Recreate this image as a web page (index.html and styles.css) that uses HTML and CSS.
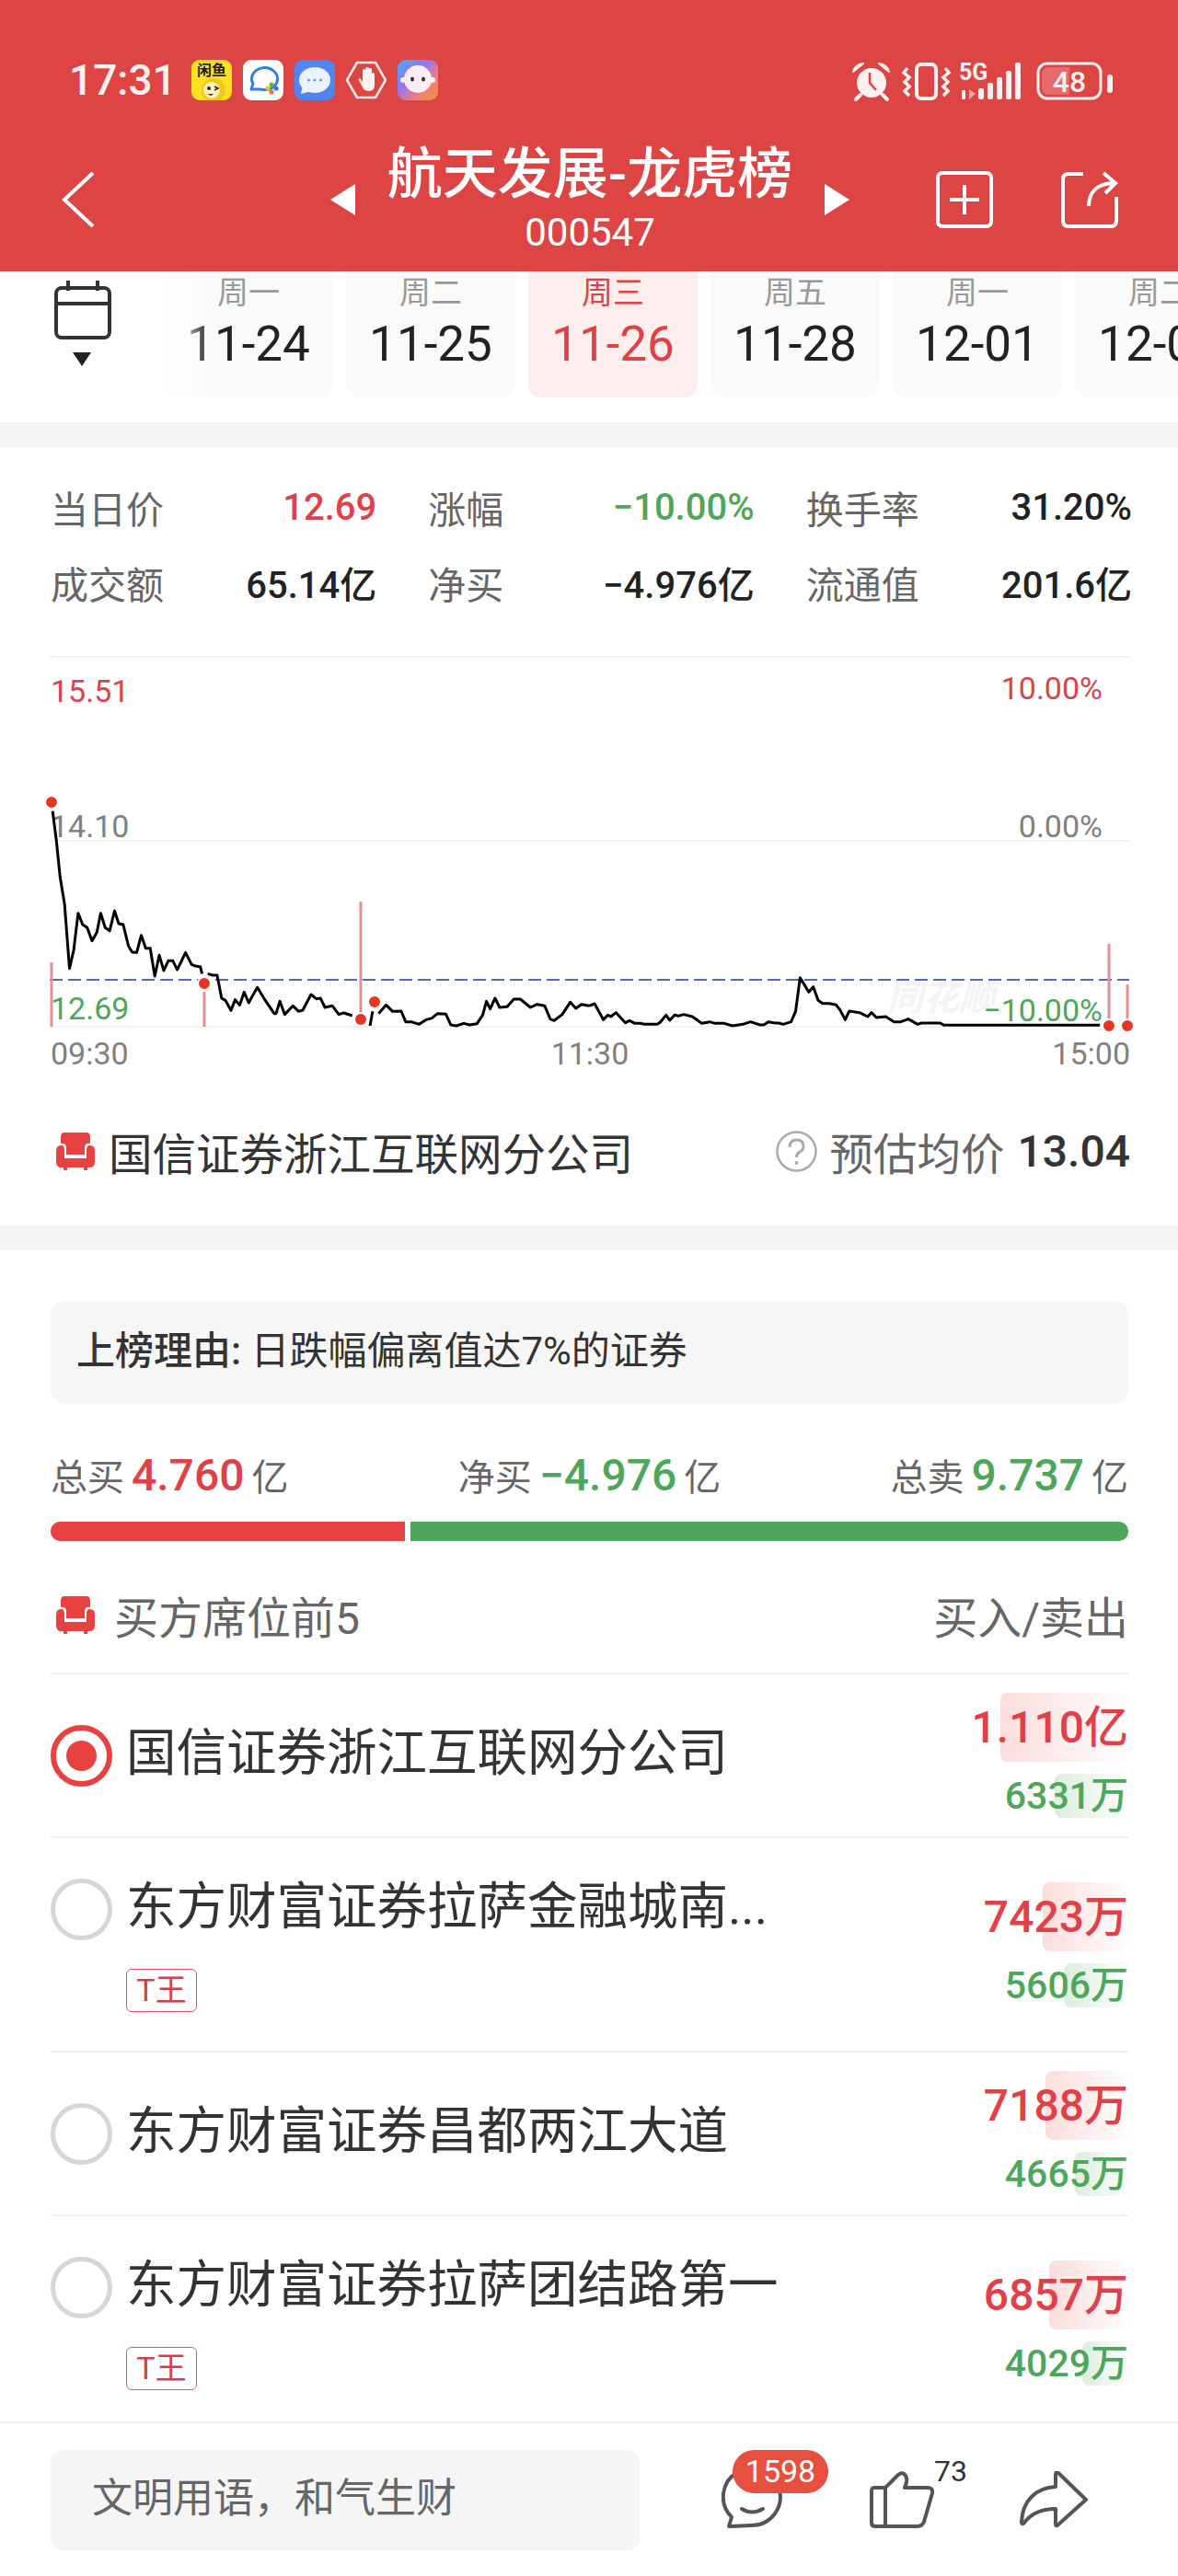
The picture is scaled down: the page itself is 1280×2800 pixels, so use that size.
FILE: index.html
```html
<!DOCTYPE html>
<html lang="zh-CN">
  <head>
    <meta charset="UTF-8" />
    <meta name="viewport" content="width=device-width, initial-scale=1.0" />
    <title>航天发展-龙虎榜</title>

    <link rel="stylesheet" href="styles.css">
  </head>
  <body>
    <main class="page">
      <!-- Header -->
      <header class="top">
        <div class="status">
          <div class="status-left">
            <span class="clock">17:31</span>
            <svg class="app" viewBox="0 0 44 44">
              <rect width="44" height="44" rx="9" fill="#fbe122" />
              <text class="app-text" x="22" y="17" text-anchor="middle">闲鱼</text>
              <circle cx="24" cy="33" r="13" fill="#f6c51c" />
              <circle cx="22" cy="33" r="9" fill="#fff4b8" />
              <circle cx="19" cy="31" r="2" fill="#222" />
              <path d="M25 29 l4 2 l-4 2" fill="none" stroke="#222" stroke-width="1.5" />
              <path d="M18 37 q3 4 6 0 z" fill="#7a2a12" />
            </svg>
            <svg class="app" viewBox="0 0 44 44">
              <rect width="44" height="44" rx="9" fill="#fff" />
              <path d="M9 32 L11 26 A14 12 0 1 1 19 32 Z" fill="none" stroke="#2f7fd6" stroke-width="3" stroke-linejoin="round" />
              <circle cx="31" cy="27" r="2.6" fill="#6fb536" />
              <circle cx="36" cy="31" r="2.6" fill="#2f7fd6" />
              <circle cx="31" cy="35" r="2.6" fill="#e3782f" />
              <circle cx="27" cy="31" r="2.6" fill="#f3c21c" />
            </svg>
            <svg class="app" viewBox="0 0 44 44">
              <rect width="44" height="44" rx="9" fill="#4f84f1" />
              <ellipse cx="22" cy="22" rx="17" ry="14" fill="#eaf2fe" />
              <path d="M9 27 L7 37 L18 34 Z" fill="#eaf2fe" />
              <circle cx="15.500" cy="22" r="1.600" fill="#6c98ef" />
              <circle cx="22" cy="22" r="1.600" fill="#6c98ef" />
              <circle cx="28.500" cy="22" r="1.600" fill="#6c98ef" />
            </svg>
            <svg class="app" viewBox="0 0 44 44">
              <path d="M12 3 H32 L43 22 L32 41 H12 L1 22 Z" fill="none" stroke="#fdeaea" stroke-width="2.500" stroke-linejoin="round" />
              <path d="M14 22 L18 30 Q20 34 25 34 Q31 34 31 27 V15 Q29 13 28 15 V10 Q26 8 25 10 V9 Q23 7 21 9 V11 Q19 9 18 11 V24 L15 20 Q13 20 14 22 Z" fill="#fdf2f2" />
            </svg>
            <svg class="app" viewBox="0 0 44 44">
              <defs>
                <linearGradient id="blob-bg" x1="0" y1="0" x2="1" y2="1">
                  <stop offset="0" stop-color="#4aa8f5" />
                  <stop offset="0.400" stop-color="#9a74f0" />
                  <stop offset="0.700" stop-color="#ef7f7a" />
                  <stop offset="1" stop-color="#f0932f" />
                </linearGradient>
              </defs>
              <rect width="44" height="44" rx="9" fill="url(#blob-bg)" />
              <ellipse cx="22" cy="21" rx="15" ry="15" fill="#fbeef2" />
              <circle cx="6" cy="22" r="3" fill="#fbeef2" />
              <circle cx="38" cy="22" r="3" fill="#fbeef2" />
              <ellipse cx="16" cy="21" rx="2" ry="2.500" fill="#3a2a4a" />
              <ellipse cx="28" cy="21" rx="2" ry="2.500" fill="#3a2a4a" />
            </svg>
          </div>
          <svg class="status-right" viewBox="920 60 295 50">
            <!-- alarm -->
            <circle cx="947" cy="88" r="16" fill="#fdf0f0" />
            <path d="M927 76 Q929 68 938 67 Z M966 76 Q964 68 955 67 Z" fill="#fdf0f0" stroke="#fdf0f0" stroke-width="2" stroke-linejoin="round" />
            <path d="M935 101 L930 106 M959 101 L964 106" stroke="#fdf0f0" stroke-width="4" stroke-linecap="round" />
            <path d="M945 77 V88 L952 96" fill="none" stroke="#dc4543" stroke-width="2.500" />
            <!-- vibrate -->
            <rect x="996" y="68" width="21" height="37" rx="5" fill="none" stroke="#fdf0f0" stroke-width="4" />
            <path d="M986 72 L982 77 L988 82 L983 87 L988 92 L983 97 L988 102 M1027 72 L1031 77 L1025 82 L1030 87 L1025 92 L1030 97 L1025 102" fill="none" stroke="#fdf0f0" stroke-width="3.500" />
            <!-- network -->
            <text class="net-text" x="1042" y="85">5G</text>
            <rect x="1045" y="96" width="4" height="10" rx="1" fill="#fdf0f0" />
            <path d="M1053 95 V106 L1060 100 Z" fill="#f3a5a5" />
            <rect x="1063" y="94" width="6" height="12" rx="2" fill="#fdf0f0" />
            <rect x="1073" y="88" width="6" height="18" rx="2" fill="#fdf0f0" />
            <rect x="1083" y="82" width="6" height="24" rx="2" fill="#fdf0f0" />
            <rect x="1093" y="75" width="6" height="31" rx="2" fill="#fdf0f0" />
            <rect x="1103" y="66" width="6" height="40" rx="2" fill="#fdf0f0" />
            <!-- battery -->
            <rect x="1128" y="67" width="68" height="38" rx="10" fill="none" stroke="#fdf0f0" stroke-width="3" />
            <path d="M1140 71 H1162 V101 H1140 Q1132 101 1132 93 V79 Q1132 71 1140 71 Z" fill="#e76a6a" />
            <text class="battery-text" x="1162" y="98" text-anchor="middle">48</text>
            <rect x="1203" y="79" width="6" height="20" rx="3" fill="#fdf0f0" />
          </svg>
        </div>

        <nav class="nav">
          <svg class="nav-back" viewBox="0 0 36 62">
            <polyline points="34,2 3,31 34,60" fill="none" stroke="#fff" stroke-width="4" />
          </svg>
          <div class="nav-title">
            <span class="arrow arrow-left"></span>
            <div class="nav-text">
              <h1>航天发展-龙虎榜</h1>
              <p>000547</p>
            </div>
            <span class="arrow arrow-right"></span>
          </div>
          <div class="nav-actions">
            <svg class="nav-icon" viewBox="0 0 62 62">
              <rect x="2" y="2" width="58" height="58" rx="5" fill="none" stroke="#fff" stroke-width="4" />
              <path d="M15 31 H47 M31 15 V47" stroke="#fff" stroke-width="4" />
            </svg>
            <svg class="nav-icon" viewBox="0 0 62 62">
              <path d="M24 3 H8 Q2 3 2 9 V54 Q2 60 8 60 H54 Q60 60 60 54 V28" fill="none" stroke="#fff" stroke-width="4" />
              <path d="M30 38 C30 24 38 14 56 13 M46 2 L59 13 L48 24" fill="none" stroke="#fff" stroke-width="4" />
            </svg>
          </div>
        </nav>
      </header>

      <!-- Date picker -->
      <section class="dates">
        <div class="cal">
          <svg class="cal-icon" viewBox="0 0 62 64">
            <rect x="2" y="8" width="58" height="54" rx="6" fill="none" stroke="#333" stroke-width="4" />
            <path d="M2 25 H60" stroke="#333" stroke-width="4" />
            <path d="M15 0 V11 M47 0 V11" stroke="#333" stroke-width="4" />
          </svg>
          <span class="cal-caret"></span>
        </div>
        <div class="tabs">
          <div class="tab"><span>周一</span><b>11-24</b></div>
          <div class="tab"><span>周二</span><b>11-25</b></div>
          <div class="tab tab-active"><span>周三</span><b>11-26</b></div>
          <div class="tab"><span>周五</span><b>11-28</b></div>
          <div class="tab"><span>周一</span><b>12-01</b></div>
          <div class="tab"><span>周二</span><b>12-02</b></div>
        </div>
      </section>

      <div class="band"></div>

      <!-- Quote -->
      <section class="stats">
        <div class="stat"><span>当日价</span><b class="up">12.69</b></div>
        <div class="stat"><span>涨幅</span><b class="down">−10.00%</b></div>
        <div class="stat"><span>换手率</span><b>31.20%</b></div>
        <div class="stat"><span>成交额</span><b>65.14亿</b></div>
        <div class="stat"><span>净买</span><b>−4.976亿</b></div>
        <div class="stat"><span>流通值</span><b>201.6亿</b></div>
      </section>

      <svg class="chart" viewBox="0 680 1280 490">
        <text class="chart-mark" x="964" y="1098">同花顺</text>

        <path d="M54 714 H1227 M54 914 H1227 M54 1116 H1227" stroke="#f1f1f1" stroke-width="2" />
        <path d="M54 1065 H1227" stroke="#5069c9" stroke-width="2" stroke-dasharray="14 6" />

        <path d="M56 1046 V1116 M222 1078 V1116 M392 980 V1116 M1205 1026 V1116 M1225 1070 V1116" stroke="#e58d96" stroke-width="3" />

        <text class="chart-text up-fill" x="55" y="763">15.51</text>
        <text class="chart-text up-fill" x="1198" y="760" text-anchor="end">10.00%</text>
        <text class="chart-text grey-fill" x="55" y="910">14.10</text>
        <text class="chart-text grey-fill" x="1198" y="910" text-anchor="end">0.00%</text>
        <text class="chart-text down-fill" x="55" y="1108">12.69</text>
        <text class="chart-text down-fill" x="1198" y="1110" text-anchor="end">−10.00%</text>
        <text class="chart-text grey-fill" x="55" y="1157">09:30</text>
        <text class="chart-text grey-fill" x="641" y="1157" text-anchor="middle">11:30</text>
        <text class="chart-text grey-fill" x="1228" y="1157" text-anchor="end">15:00</text>

        <!-- curve points are in a 2.45x / 3x grid -->
        <g transform="translate(0,680) scale(0.40816,0.33333)" class="curve">
          <polyline points="140,605 150,700 160,820 172,910 185,1118 196,1060 208,938 220,975 232,985 245,1028 258,1000 268,938 280,985 292,995 305,930 316,972 328,975 342,1045 352,1065 364,1066 376,1010 388,1052 400,1052 412,1143 424,1075 436,1125 448,1093 460,1093 472,1122 494,1066 510,1105 520,1110 533,1112 538,1135" />
          <polyline points="553,1135 565,1140 578,1140 590,1215 600,1222 615,1255 626,1220 638,1238 650,1195 662,1230 685,1180 705,1220 730,1265 735,1265 745,1225 758,1268 780,1240 795,1258 806,1254 828,1203 842,1217 853,1215 865,1245 885,1240 902,1268 915,1263 938,1272" />
          <polyline points="985,1305 992,1258" />
          <polyline points="1008,1265 1028,1237 1045,1258 1068,1257 1080,1292 1095,1292 1116,1300 1135,1285 1150,1280 1165,1265 1187,1267 1200,1302 1215,1305 1235,1297 1250,1302 1270,1298 1285,1270 1295,1225 1305,1250 1318,1215 1330,1245 1350,1243 1368,1218 1385,1218 1412,1245 1430,1235 1450,1240 1465,1283 1475,1288 1497,1268 1518,1228 1533,1248 1548,1235 1568,1240" />
        </g>
        <g transform="translate(640,680) scale(0.40816,0.33333)" class="curve">
          <polyline points="0,1240 15,1233 38,1285 50,1270 58,1275 72,1262 97,1295 108,1288 122,1297 135,1297 148,1300 182,1300 190,1293 205,1270 215,1287 228,1270 238,1273 252,1268 275,1275 300,1297 322,1292 335,1297 360,1297 382,1305 410,1300 430,1292 455,1302 465,1302 478,1292 495,1296 505,1296 517,1300 538,1292 550,1258 562,1148 585,1195 597,1178 610,1222 622,1232 640,1232 658,1237 668,1253 682,1285 693,1257 720,1262 742,1275 752,1262 765,1278 790,1275 812,1292 830,1292 850,1283 875,1300 885,1296 935,1296 945,1303 1360,1303" />
        </g>

        <circle class="chart-dot" cx="56" cy="872" r="7" />
        <circle class="chart-dot" cx="222" cy="1069" r="7" />
        <circle class="chart-dot" cx="392" cy="1108" r="7" />
        <circle class="chart-dot" cx="407" cy="1089" r="7" />
        <circle class="chart-dot" cx="1205" cy="1115" r="7" />
        <circle class="chart-dot" cx="1225" cy="1115" r="7" />
      </svg>

      <div class="seat-head">
        <div class="seat-head-name">
          <svg class="sofa" viewBox="0 0 44 44">
            <path d="M10 2 H34 Q38 2 38 7 V14 Q32 13 32 19 V26 H12 V19 Q12 13 6 14 V7 Q6 2 10 2 Z" fill="#e84142" />
            <path d="M6 16 Q1 16 1 22 V34 Q1 40 7 40 H9 V43 H13 V40 H31 V43 H35 V40 H37 Q43 40 43 34 V22 Q43 16 38 16 Q34 16 34 21 V30 H10 V21 Q10 16 6 16 Z" fill="#e84142" />
          </svg>
          国信证券浙江互联网分公司
        </div>
        <div class="seat-head-avg">
          <svg class="help" viewBox="0 0 45 45">
            <circle cx="22.500" cy="22.500" r="21" fill="none" stroke="#aaa" stroke-width="2.500" />
            <path d="M15 18 Q15 10 22.500 10 Q30 10 30 17 Q30 21 26 23 Q22.500 25 22.500 29" fill="none" stroke="#aaa" stroke-width="3" />
            <circle cx="22.500" cy="35" r="2" fill="#aaa" />
          </svg>
          <span>预估均价</span>
          <b>13.04</b>
        </div>
      </div>

      <div class="band"></div>

      <!-- Dragon tiger list -->
      <section class="board">
        <div class="reason"><b>上榜理由:</b> 日跌幅偏离值达7%的证券</div>

        <div class="totals">
          <div class="total">总买<b class="up">4.760</b>亿</div>
          <div class="total">净买<b class="down">−4.976</b>亿</div>
          <div class="total">总卖<b class="down">9.737</b>亿</div>
        </div>

        <div class="ratio">
          <div class="ratio-buy"></div>
          <div class="ratio-sell"></div>
        </div>

        <div class="list-head">
          <div class="list-title">
            <svg class="sofa" viewBox="0 0 44 44">
              <path d="M10 2 H34 Q38 2 38 7 V14 Q32 13 32 19 V26 H12 V19 Q12 13 6 14 V7 Q6 2 10 2 Z" fill="#e84142" />
              <path d="M6 16 Q1 16 1 22 V34 Q1 40 7 40 H9 V43 H13 V40 H31 V43 H35 V40 H37 Q43 40 43 34 V22 Q43 16 38 16 Q34 16 34 21 V30 H10 V21 Q10 16 6 16 Z" fill="#e84142" />
            </svg>
            买方席位前5
          </div>
          <div>买入/卖出</div>
        </div>

        <div class="row">
          <div class="row-main">
            <span class="radio radio-on"></span>
            <div class="row-name">国信证券浙江互联网分公司</div>
          </div>
          <div class="amounts">
            <div class="amount amount-buy"><i style="width: 139px"></i><b>1.110亿</b></div>
            <div class="amount amount-sell"><i style="width: 80px"></i><b>6331万</b></div>
          </div>
        </div>

        <div class="row row-tall">
          <div class="row-main">
            <span class="radio"></span>
            <div class="row-name">东方财富证券拉萨金融城南...</div>
            <span class="tag">T王</span>
          </div>
          <div class="amounts">
            <div class="amount amount-buy"><i style="width: 93px"></i><b>7423万</b></div>
            <div class="amount amount-sell"><i style="width: 70px"></i><b>5606万</b></div>
          </div>
        </div>

        <div class="row">
          <div class="row-main">
            <span class="radio"></span>
            <div class="row-name">东方财富证券昌都两江大道</div>
          </div>
          <div class="amounts">
            <div class="amount amount-buy"><i style="width: 90px"></i><b>7188万</b></div>
            <div class="amount amount-sell"><i style="width: 58px"></i><b>4665万</b></div>
          </div>
        </div>

        <div class="row row-tall">
          <div class="row-main">
            <span class="radio"></span>
            <div class="row-name">东方财富证券拉萨团结路第一</div>
            <span class="tag">T王</span>
          </div>
          <div class="amounts">
            <div class="amount amount-buy"><i style="width: 86px"></i><b>6857万</b></div>
            <div class="amount amount-sell"><i style="width: 50px"></i><b>4029万</b></div>
          </div>
        </div>
      </section>

      <!-- Comment bar, stays over the list -->
      <footer class="bar">
        <div class="bar-input">文明用语，和气生财</div>
        <div class="bar-item bar-comment">
          <svg class="bar-icon" viewBox="0 0 66 62">
            <path d="M8 60 L11 50 A31 31 0 1 1 33 59 L11 60 Z" fill="none" stroke="#555" stroke-width="4" stroke-linejoin="round" />
            <path d="M22 41 Q33 48 45 41" fill="none" stroke="#555" stroke-width="4" stroke-linecap="round" />
          </svg>
          <span class="badge">1598</span>
        </div>
        <div class="bar-item bar-like">
          <svg class="bar-icon" viewBox="0 0 70 62">
            <path d="M5 18 H17 L31 4 Q36 0 39 5 Q42 10 38 18 H63 Q69 18 68 24 L59 55 Q57 60 52 60 H6 Q2 60 2 56 V22 Q2 18 5 18 Z M17 18 V60" fill="none" stroke="#555" stroke-width="4" stroke-linejoin="round" />
          </svg>
          <span class="like-count">73</span>
        </div>
        <div class="bar-item bar-share">
          <svg class="bar-icon" viewBox="0 0 74 62">
            <path d="M72 31 L42 2 Q39 0 39 4 V17 C18 18 3 32 2 55 Q2 59 5 56 C14 44 26 41 39 41 V57 Q39 61 42 58 Z" fill="none" stroke="#555" stroke-width="4" stroke-linejoin="round" />
          </svg>
        </div>
      </footer>
    </main>
  </body>
</html>
```

FILE: styles.css
```css
* {
  box-sizing: border-box;
}

body {
  margin: 0;
  background: #fff;
  font-family: Roboto, "Noto Sans CJK SC", sans-serif;
  color: #222;
}

h1,
p {
  margin: 0;
}

.page {
  position: relative;
  width: 1280px;
  height: 2800px;
  overflow: hidden;
}

.up {
  color: #e04047;
}

.down {
  color: #4ea65a;
}

.band {
  height: 27px;
  background: #f5f5f5;
}

/* Header */
.top {
  height: 295px;
  padding-top: 64px;
  background: #dc4543;
  color: #fff;
}

.status {
  display: flex;
  justify-content: space-between;
  align-items: center;
  height: 45px;
  padding: 0 65px 0 75px;
}

.status-left {
  display: flex;
  align-items: center;
  gap: 12px;
}

.clock {
  width: 121px;
  font-size: 46px;
  font-weight: 500;
  color: #fdf0f0;
}

.app {
  display: block;
  width: 44px;
  height: 44px;
}

.app-text {
  font-size: 16px;
  font-weight: 700;
  fill: #222;
}

.status-right {
  display: block;
  width: 295px;
  height: 50px;
}

.net-text {
  font-size: 25px;
  font-weight: 700;
  fill: #fdf0f0;
}

.battery-text {
  font-size: 32px;
  font-weight: 500;
  fill: #fdf0f0;
}

.nav {
  display: grid;
  grid-template-columns: 1fr auto 1fr;
  align-items: center;
  margin-top: 46px;
  padding: 0 65px 0 67px;
}

.nav-back {
  display: block;
  width: 36px;
  height: 62px;
  margin-top: 4px;
}

.nav-title {
  display: flex;
  align-items: center;
  gap: 35px;
}

.nav-text {
  text-align: center;
}

.nav-text h1 {
  font-size: 60px;
  font-weight: 500;
  line-height: 70px;
}

.nav-text p {
  margin-top: 6px;
  font-size: 42px;
  line-height: 44px;
}

.arrow {
  width: 0;
  height: 0;
  margin-top: 4px;
  border-top: 17px solid transparent;
  border-bottom: 17px solid transparent;
}

.arrow-left {
  border-right: 27px solid #fff;
}

.arrow-right {
  border-left: 27px solid #fff;
}

.nav-actions {
  display: flex;
  justify-content: flex-end;
  gap: 74px;
  margin-top: 4px;
}

.nav-icon {
  display: block;
  width: 62px;
  height: 62px;
}

/* Date picker */
.dates {
  display: flex;
  height: 164px;
  overflow: hidden;
}

.cal {
  position: relative;
  z-index: 1;
  flex: none;
  width: 178px;
  padding: 10px 0 0 59px;
  background: #fff;
}

.cal::after {
  content: "";
  position: absolute;
  top: 0;
  left: 100%;
  width: 50px;
  height: 137px;
  background: linear-gradient(to right, rgba(255, 255, 255, 0.9), rgba(255, 255, 255, 0.5) 60%, rgba(255, 255, 255, 0));
}

.cal-icon {
  display: block;
  width: 62px;
  height: 64px;
}

.cal-caret {
  display: block;
  width: 0;
  height: 0;
  margin: 14px 0 0 20px;
  border-top: 15px solid #222;
  border-left: 10px solid transparent;
  border-right: 10px solid transparent;
}

.tabs {
  display: flex;
  gap: 14px;
}

.tab {
  display: flex;
  flex: none;
  flex-direction: column;
  align-items: center;
  width: 184px;
  height: 137px;
  border-radius: 0 0 14px 14px;
  background: #fafafa;
}

.tab span {
  margin-top: 5px;
  font-size: 34px;
  line-height: 36px;
  color: #999;
}

.tab b {
  margin-top: 8px;
  font-size: 53px;
  font-weight: 400;
  line-height: 60px;
  color: #222;
}

.tab-active {
  background: #fdeeee;
}

.tab-active span,
.tab-active b {
  color: #e04047;
}

/* Quote */
.stats {
  display: grid;
  grid-template-columns: repeat(3, 1fr);
  gap: 22px 56px;
  height: 194px;
  padding: 35px 50px 0 55px;
  align-content: start;
}

.stat {
  display: flex;
  justify-content: space-between;
  align-items: center;
  height: 60px;
  font-size: 41px;
}

.stat span {
  color: #666;
}

.stat b {
  font-size: 40px;
  font-weight: 500;
}

.chart {
  display: block;
  width: 1280px;
  height: 490px;
}

.chart-text {
  font-size: 34px;
}

.up-fill {
  fill: #d8444c;
}

.down-fill {
  fill: #4ea65a;
}

.grey-fill {
  fill: #808080;
}

.chart-mark {
  font-size: 39px;
  font-style: italic;
  font-weight: 700;
  fill: #f4f4f4;
}

.curve polyline {
  fill: none;
  stroke: #000;
  stroke-width: 3;
  stroke-linejoin: round;
  vector-effect: non-scaling-stroke;
}

.chart-dot {
  fill: #e53525;
  stroke: #fff;
  stroke-width: 2;
}

.seat-head {
  display: flex;
  justify-content: space-between;
  align-items: center;
  height: 162px;
  padding: 0 52px 0 60px;
  font-size: 47.500px;
}

.seat-head-name {
  display: flex;
  align-items: center;
  gap: 14px;
  color: #333;
}

.sofa {
  display: block;
  flex: none;
  width: 44px;
  height: 44px;
}

.seat-head-avg {
  display: flex;
  align-items: center;
}

.help {
  display: block;
  width: 45px;
  height: 45px;
  margin-right: 14px;
}

.seat-head-avg span {
  color: #666;
}

.seat-head-avg b {
  margin-left: 14px;
  font-size: 48px;
  font-weight: 500;
  color: #333;
}

/* Dragon tiger list */
.board {
  padding: 56px 54px 0 55px;
}

.reason {
  height: 110px;
  padding: 0 28px;
  border-radius: 14px;
  background: #f6f6f6;
  font-size: 42px;
  line-height: 108px;
  color: #333;
}

.reason b {
  font-weight: 500;
}

.totals {
  display: flex;
  justify-content: space-between;
  margin-top: 48px;
}

.total {
  display: flex;
  align-items: center;
  height: 60px;
  font-size: 40px;
  color: #666;
}

.total b {
  margin: 0 8px;
  font-size: 48px;
  font-weight: 500;
}

.ratio {
  display: flex;
  gap: 6px;
  height: 21px;
  margin-top: 21px;
}

.ratio-buy {
  flex: none;
  width: 385px;
  border-radius: 10px 0 0 10px;
  background: #e84142;
}

.ratio-sell {
  flex: 1;
  border-radius: 0 10px 10px 0;
  background: #4ea65a;
}

.list-head {
  display: flex;
  justify-content: space-between;
  align-items: center;
  height: 145px;
  padding: 17px 0 0 5px;
  border-bottom: 2px solid #eee;
  font-size: 48px;
  color: #666;
}

.list-title {
  display: flex;
  align-items: center;
  gap: 20px;
}

.row {
  display: flex;
  justify-content: space-between;
  align-items: center;
  height: 178px;
  border-bottom: 2px solid #eee;
}

.row-tall {
  height: 233px;
}

.row-main {
  display: grid;
  grid-template-columns: 67px auto;
  column-gap: 15px;
  padding-bottom: 6px;
}

.row-name {
  font-size: 54.500px;
  line-height: 76px;
  color: #333;
}

.radio {
  position: relative;
  width: 67px;
  height: 67px;
  margin-top: 8px;
  border: 5px solid #d6d6d6;
  border-radius: 50%;
}

.radio-on {
  border: 6px solid #e84142;
}

.radio-on::after {
  content: "";
  position: absolute;
  top: 11px;
  left: 11px;
  width: 33px;
  height: 33px;
  border-radius: 50%;
  background: #e84142;
}

.tag {
  grid-column: 2;
  width: 77px;
  height: 47px;
  margin-top: 30px;
  border: 1px solid #d8575f;
  border-radius: 6px;
  font-size: 34px;
  line-height: 44px;
  text-align: center;
  color: #d0404a;
}

.amounts {
  display: flex;
  flex-direction: column;
  align-items: flex-end;
  gap: 13px;
}

.amount {
  position: relative;
  text-align: right;
  white-space: nowrap;
}

.amount i {
  position: absolute;
  top: 0;
  right: 0;
  bottom: 0;
  border-radius: 8px 0 0 8px;
}

.amount b {
  position: relative;
}

.amount-buy {
  height: 75px;
  font-size: 48px;
  line-height: 75px;
  color: #e04047;
}

.amount-buy i {
  background: linear-gradient(to right, rgba(232, 65, 66, 0.18), rgba(232, 65, 66, 0.01));
}

.amount-buy b {
  font-weight: 500;
}

.amount-sell {
  height: 48px;
  font-size: 41px;
  line-height: 48px;
  color: #4ea65a;
}

.amount-sell i {
  background: linear-gradient(to right, rgba(78, 166, 90, 0.2), rgba(78, 166, 90, 0.01));
}

.amount-sell b {
  font-weight: 500;
}

/* Comment bar */
.bar {
  position: absolute;
  left: 0;
  bottom: 0;
  display: flex;
  align-items: center;
  width: 1280px;
  height: 168px;
  padding-left: 55px;
  border-top: 2px solid #eee;
  background: #fff;
}

.bar-input {
  width: 640px;
  height: 109px;
  padding-left: 45px;
  border-radius: 14px;
  background: #f5f5f5;
  font-size: 44px;
  line-height: 107px;
  color: #666;
}

.bar-item {
  position: relative;
  flex: none;
}

.bar-comment {
  width: 66px;
  height: 62px;
  margin-left: 89px;
}

.bar-like {
  width: 70px;
  height: 62px;
  margin-left: 95px;
}

.bar-share {
  width: 74px;
  height: 62px;
  margin-left: 93px;
}

.bar-icon {
  display: block;
  width: 100%;
  height: 100%;
}

.badge {
  position: absolute;
  top: -23px;
  left: 12px;
  width: 104px;
  height: 47px;
  border-radius: 24px;
  background: #e74f40;
  font-size: 34px;
  line-height: 47px;
  text-align: center;
  color: #fff;
}

.like-count {
  position: absolute;
  top: -19px;
  left: 70px;
  font-size: 32px;
  line-height: 38px;
  color: #333;
}
```
